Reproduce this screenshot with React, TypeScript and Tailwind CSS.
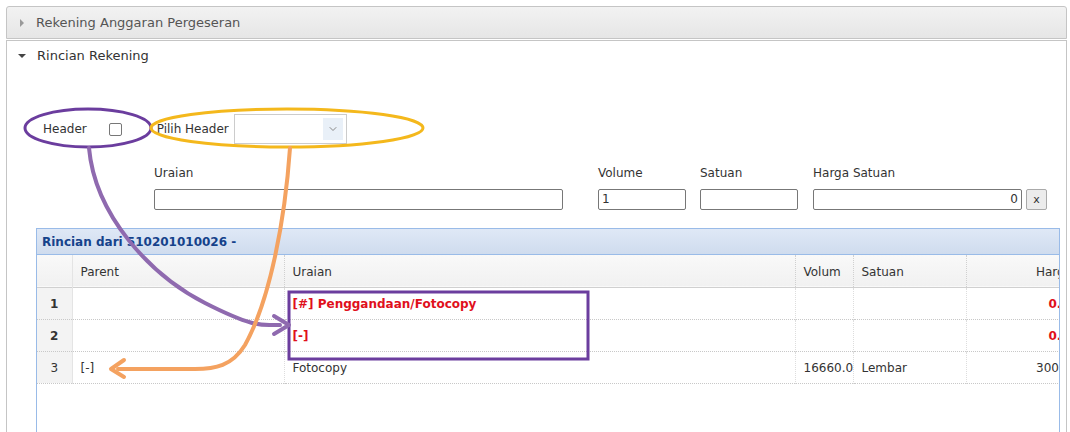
import { ChevronDown } from 'lucide-react'

const rows = [
  { no: '1', parent: '', uraian: '[#] Penggandaan/Fotocopy', volum: '', satuan: '', harga: '0.00', head: true },
  { no: '2', parent: '', uraian: '[-]', volum: '', satuan: '', harga: '0.00', head: true },
  { no: '3', parent: '[-]', uraian: 'Fotocopy', volum: '16660.00', satuan: 'Lembar', harga: '300.00', head: false },
]

function Overlay() {
  return (
    <svg
      className="pointer-events-none absolute left-0 top-0"
      width="1070"
      height="432"
      viewBox="0 0 1070 432"
      fill="none"
    >
      {/* lingkaran */}
      <ellipse cx="88" cy="128" rx="63" ry="19" stroke="#6b3d9e" strokeWidth="3" />
      <ellipse cx="287" cy="128" rx="136" ry="19" stroke="#f4b81c" strokeWidth="3" />
      {/* kotak header */}
      <rect x="289" y="292" width="299" height="67" stroke="#6b3d9e" strokeWidth="3" />
      {/* panah ungu */}
      <path
        d="M89 148 C 95 215, 150 275, 205 303 S 265 324, 280 325"
        stroke="#8f6aaf"
        strokeWidth="4"
        strokeLinecap="round"
      />
      <path d="M274 316 L 289 325 L 274 334" stroke="#8f6aaf" strokeWidth="4" strokeLinecap="round" strokeLinejoin="round" />
      {/* panah oranye */}
      <path
        d="M290 148 C 285 220, 270 300, 245 345 C 232 366, 215 369, 195 369 L 118 369"
        stroke="#f4a260"
        strokeWidth="4"
        strokeLinecap="round"
      />
      <path d="M124 360 L 111 369 L 124 377" stroke="#f4a260" strokeWidth="4" strokeLinecap="round" strokeLinejoin="round" />
    </svg>
  )
}

export default function App() {
  return (
    <div className="relative h-[432px] w-[1070px] overflow-hidden bg-white font-['DejaVu_Sans',sans-serif] text-[12px] text-[#333]">
      <div className="pl-[6px] pr-[3px] pt-[6px]">
        {/* Rekening Anggaran Pergeseran */}
        <div className="flex h-[33px] items-center rounded-t-[3px] border border-[#c5c5c5] bg-gradient-to-b from-[#f2f2f2] to-[#e6e6e6] pl-[13px]">
          <span className="h-0 w-0 border-y-[4px] border-l-[4px] border-y-transparent border-l-[#999]" />
          <span className="ml-[12px] text-[13px] text-[#555]">Rekening Anggaran Pergeseran</span>
        </div>

        {/* Rincian Rekening */}
        <div className="mt-[1px] h-[400px] border border-b-0 border-[#c5c5c5]">
          <div className="flex h-[30px] items-center pl-[11px]">
            <span className="h-0 w-0 border-x-[4px] border-t-[4px] border-x-transparent border-t-[#444]" />
            <span className="ml-[11px] text-[13px] text-[#333]">Rincian Rekening</span>
          </div>

          {/* header */}
          <div className="mt-[43px] flex h-[30px] items-center pl-[36px]">
            <span>Header</span>
            <span className="ml-[22px] h-[13px] w-[13px] rounded-[2px] border border-[#777] bg-white" />
            <span className="ml-[35px]">Pilih Header</span>
            <div className="ml-[5px] flex h-[30px] w-[113px] items-center justify-end border border-[#ccc] bg-white pr-[3px]">
              <span className="flex h-[22px] w-[20px] items-center justify-center bg-[#e9f0f8]">
                <ChevronDown className="h-[12px] w-[12px] text-[#888]" strokeWidth={2} />
              </span>
            </div>
          </div>

          {/* form */}
          <div className="mt-[20px] flex pl-[147px]">
            <div className="flex flex-col">
              <span className="h-[25px]">Uraian</span>
              <span className="h-[21px] w-[409px] rounded-[2px] border border-[#777] bg-white" />
            </div>
            <div className="ml-[35px] flex flex-col">
              <span className="h-[25px]">Volume</span>
              <span className="h-[21px] w-[88px] rounded-[2px] border border-[#777] bg-white pl-[3px] leading-[19px]">1</span>
            </div>
            <div className="ml-[14px] flex flex-col">
              <span className="h-[25px]">Satuan</span>
              <span className="h-[21px] w-[98px] rounded-[2px] border border-[#777] bg-white" />
            </div>
            <div className="ml-[15px] flex flex-col">
              <span className="h-[25px]">Harga Satuan</span>
              <div className="flex">
                <span className="h-[21px] w-[209px] rounded-[2px] border border-[#777] bg-white pr-[3px] text-right leading-[19px]">0</span>
                <span className="ml-[4px] flex h-[21px] w-[21px] items-center justify-center rounded-[2px] border border-[#aaa] bg-[#ececec] text-[11px] leading-none">
                  x
                </span>
              </div>
            </div>
          </div>

          {/* grid */}
          <div className="ml-[29px] mt-[18px] h-[210px] w-[1024px] overflow-hidden border border-b-0 border-[#99bbe8]">
            <div className="flex h-[26px] items-center border-b border-[#99bbe8] bg-gradient-to-b from-[#dfe8f6] to-[#cfdcee] pl-[5px] text-[12px] font-bold text-[#15428b]">
              Rincian dari 510201010026 -
            </div>
            <table className="w-[1049px] max-w-none table-fixed border-collapse">
              <colgroup>
                <col className="w-[35px]" />
                <col className="w-[212px]" />
                <col className="w-[511px]" />
                <col className="w-[58px]" />
                <col className="w-[113px]" />
                <col className="w-[120px]" />
              </colgroup>
              <thead>
                <tr className="h-[32px] border-b border-[#d0d0d0] bg-gradient-to-b from-[#f9f9f9] to-[#f1f1f1] text-left font-normal">
                  <th className="border-r border-[#e4e4e4]" />
                  <th className="border-r border-dotted border-[#d0d0d0] pl-[8px] pt-[3px] font-normal">Parent</th>
                  <th className="border-r border-dotted border-[#d0d0d0] pl-[8px] pt-[3px] font-normal">Uraian</th>
                  <th className="border-r border-dotted border-[#d0d0d0] pl-[8px] pt-[3px] font-normal">Volum</th>
                  <th className="border-r border-dotted border-[#d0d0d0] pl-[8px] pt-[3px] font-normal">Satuan</th>
                  <th className="pr-[14px] pt-[3px] text-right font-normal">Harga</th>
                </tr>
              </thead>
              <tbody>
                {rows.map((r) => (
                  <tr key={r.no} className="h-[32px] border-b border-dotted border-[#c8c8c8]">
                    <td className={`border-r border-[#e4e4e4] bg-[#f3f3f3] pt-[1px] text-center ${r.head ? 'font-bold' : ''}`}>
                      {r.no}
                    </td>
                    <td className="overflow-hidden whitespace-nowrap border-r border-dotted border-[#ddd] pl-[8px] pt-[1px]">{r.parent}</td>
                    <td
                      className={`overflow-hidden whitespace-nowrap border-r border-dotted border-[#ddd] pl-[8px] pt-[1px] ${
                        r.head ? 'font-bold text-[#e0101c]' : ''
                      }`}
                    >
                      {r.uraian}
                    </td>
                    <td className="overflow-hidden whitespace-nowrap border-r border-dotted border-[#ddd] pl-[8px] pt-[1px]">{r.volum}</td>
                    <td className="overflow-hidden whitespace-nowrap border-r border-dotted border-[#ddd] pl-[8px] pt-[1px]">{r.satuan}</td>
                    <td className={`overflow-hidden whitespace-nowrap pr-[8px] pt-[1px] text-right ${r.head ? 'font-bold text-[#e0101c]' : ''}`}>
                      {r.harga}
                    </td>
                  </tr>
                ))}
              </tbody>
            </table>
          </div>
        </div>
      </div>
      <Overlay />
    </div>
  )
}
